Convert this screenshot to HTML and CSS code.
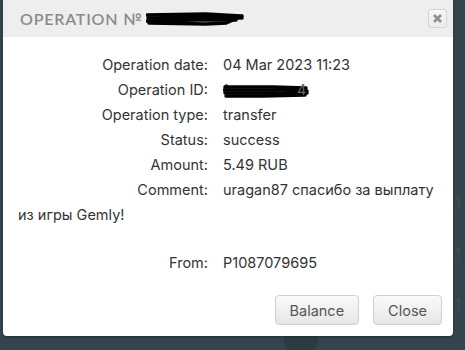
FILE: index.html
```html
<!DOCTYPE html>
<html lang="en">
<head>
  <meta charset="UTF-8">
  <meta name="viewport" content="width=device-width, initial-scale=1.0">
  <title>Operation</title>
  <link rel="stylesheet" href="styles.css">
</head>
<body>
  <div class="backdrop-marks">
    <span class="bg-num">1</span>
    <span class="bg-num">1</span>
    <span class="bg-num">1</span>
  </div>
  <div class="bg-circle"></div>

  <div id="operation-modal" class="modal">
    <div class="modal-header">
      <h3 class="modal-title">Operation №
        <svg class="scribble scribble-title" width="98" height="14" viewBox="0 0 98 14">
          <path d="M1 3 L60 2 L95 4" />
          <path d="M2 6 L70 5 L96 6" />
          <path d="M1 9 L50 8 L90 8" />
          <path d="M3 11 L60 12 L80 11 L96 4" />
        </svg>
      </h3>
      <button class="close-x" type="button" aria-label="Close">
        <svg width="9" height="9" viewBox="0 0 9 9">
          <path d="M1 1 L8 8 M8 1 L1 8" />
        </svg>
      </button>
    </div>

    <div class="modal-body">
      <div class="row"><span class="label">Operation date:</span>04 Mar 2023 11:23</div>
      <div class="row"><span class="label">Operation ID:</span><span class="id-value">1<svg class="scribble scribble-id" width="86" height="15" viewBox="0 0 86 15">
          <path d="M2 3 L50 3 L83 4" />
          <path d="M1 6 L60 6 L84 7" />
          <path d="M2 9 L60 9 L84 9" />
          <path d="M3 12 L40 12 L82 11" />
        </svg>4</span></div>
      <div class="row"><span class="label">Operation type:</span>transfer</div>
      <div class="row"><span class="label">Status:</span>success</div>
      <div class="row"><span class="label">Amount:</span>5.49 RUB</div>
      <div class="row"><span class="label">Comment:</span>uragan87 спасибо за выплату из игры Gemly!</div>
      <div class="row row-empty"></div>
      <div class="row"><span class="label">From:</span>P1087079695</div>
    </div>

    <div class="modal-footer">
      <button class="btn" type="button">Balance</button>
      <button class="btn" type="button">Close</button>
    </div>
  </div>
</body>
</html>
```

FILE: styles.css
```css
body {
  margin: 0;
  background-color: #34444c;
  font-family: 'Inter', 'Open Sans', sans-serif;
  position: relative;
  height: 350px;
  overflow: hidden;
}

/* faint page content behind the overlay */
.backdrop-marks {
  position: absolute;
  top: 195px;
  left: 455px;
  display: flex;
  flex-direction: column;
  gap: 34px;
}

.bg-num {
  font-size: 14px;
  color: #3f5059;
  border-bottom: 1px dotted #3f5059;
  line-height: 16px;
}

.bg-circle {
  position: absolute;
  left: 284px;
  top: 322px;
  width: 34px;
  height: 34px;
  border-radius: 50%;
  background-color: #2c3b42;
}

.modal {
  position: relative;
  width: 450px;
  margin-left: 3px;
  background-color: #fff;
  border-radius: 0 0 4px 4px;
  box-shadow: 0 1px 2px rgba(0, 0, 0, 0.3);
}

.modal-header {
  height: 37px;
  display: flex;
  align-items: center;
  justify-content: space-between;
  padding: 0 6px 0 17px;
  background-color: #eeeeee;
}

.modal-title {
  margin: 0;
  display: flex;
  align-items: center;
  font-family: 'Lato', sans-serif;
  font-size: 16px;
  font-weight: 600;
  letter-spacing: 0.8px;
  text-transform: uppercase;
  color: #8c8a8a;
}

.scribble {
  fill: none;
  stroke: #000;
  stroke-width: 3.5;
  stroke-linecap: round;
}

.scribble-title {
  margin-left: 3px;
}

.close-x {
  width: 19px;
  height: 19px;
  padding: 0;
  display: flex;
  align-items: center;
  justify-content: center;
  border: 1px solid #d4d4d4;
  border-radius: 3px;
  background: linear-gradient(#f7f7f7, #ebebeb);
}

.close-x path {
  stroke: #8f8f8f;
  stroke-width: 2.6;
  fill: none;
}

.modal-body {
  padding: 15px 15px 0 15px;
  font-size: 14.5px;
  line-height: 25px;
  color: #333;
}

.label {
  display: inline-block;
  width: 190px;
  margin-right: 15px;
  text-align: right;
}

.id-value {
  color: #666;
}

.scribble-id {
  vertical-align: middle;
  margin: 0 -12px 0 -6px;
}

.row-empty {
  height: 23px;
}

.modal-footer {
  display: flex;
  justify-content: flex-end;
  gap: 14px;
  padding: 20px 11px 11px 0;
}

.btn {
  height: 30px;
  padding: 0 14px;
  font-family: 'Inter', sans-serif;
  font-size: 14.5px;
  color: #555;
  border: 1px solid #d0d0d0;
  border-radius: 4px;
  background: linear-gradient(#fafafa, #e6e6e6);
}
```
